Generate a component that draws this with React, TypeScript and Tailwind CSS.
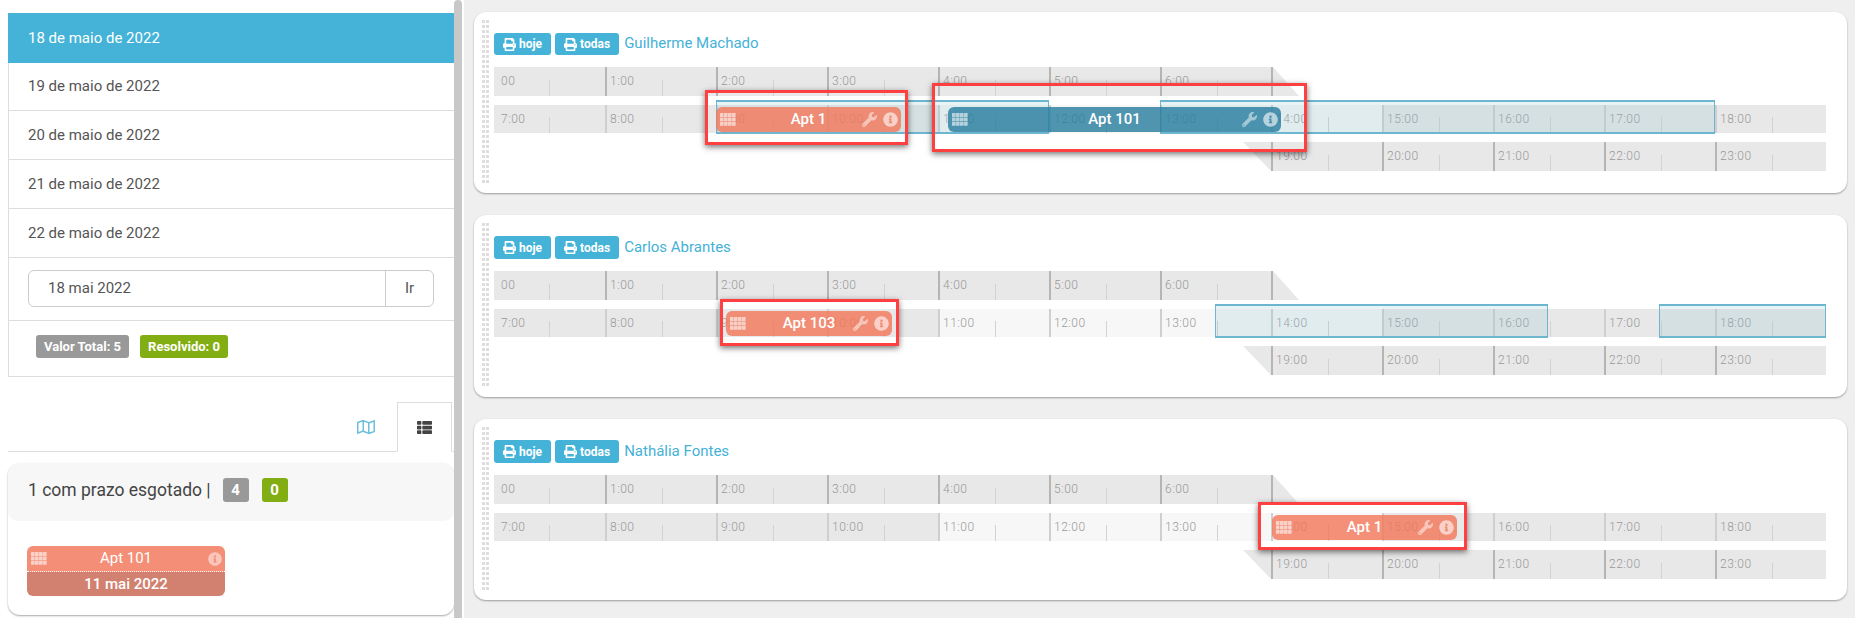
import React from 'react';
import { FaPrint, FaWrench, FaInfoCircle, FaRegMap, FaThList } from 'react-icons/fa';

const row1 = ['00', '1:00', '2:00', '3:00', '4:00', '5:00', '6:00'];
const row2 = ['7:00', '8:00', '9:00', '10:00', '11:00', '12:00', '13:00', '14:00', '15:00', '16:00', '17:00', '18:00'];
const row3 = ['19:00', '20:00', '21:00', '22:00', '23:00'];
const lightHours = ['11:00', '12:00', '13:00', '14:00'];
const days = ['19 de maio de 2022', '20 de maio de 2022', '21 de maio de 2022', '22 de maio de 2022'];

function GridIcon() {
  const cells = [];
  for (let r = 0; r < 3; r++) {
    for (let c = 0; c < 4; c++) {
      cells.push(<rect key={`${r}-${c}`} x={c * 4} y={r * 4.4} width="3.6" height="3.9" rx="0.5" />);
    }
  }
  return (
    <svg width="16" height="13" viewBox="0 0 16 13" className="fill-white opacity-60 shrink-0">
      {cells}
    </svg>
  );
}

function HourCell({ label, first, soft, light }: { label: string; first?: boolean; soft?: boolean; light?: boolean }) {
  return (
    <div
      className={`relative w-[111px] h-full shrink-0 font-light text-[12px] leading-[28px] tracking-[0.5px] text-[#999] ${
        light ? 'bg-[#f7f7f7]' : 'bg-[#e8e8e8]'
      } ${first ? 'pl-[7px]' : soft ? 'border-l-2 border-[#cfcfcf] pl-[3px]' : 'border-l-2 border-[#b5b5b5] pl-[3px]'}`}
    >
      {label}
      <span className="absolute left-[55px] bottom-0 w-px h-4 bg-[#d2d2d2]" />
    </div>
  );
}

function Highlight({ left, width }: { left: number; width: number }) {
  return (
    <div
      className="absolute -top-[5px] h-[34px] border-l border-r border-t-2 border-b-2 border-[#6db6cf] bg-[#8ec3d2]/20"
      style={{ left, width }}
    />
  );
}

function Pill({ left, width, label, blue }: { left: number; width: number; label: string; blue?: boolean }) {
  return (
    <div
      className={`absolute top-[2px] h-[25px] rounded-[6px] flex items-center pl-1 pr-[3px] text-white ${
        blue ? 'bg-[#257c9d]/80' : 'bg-[#f27557]/80'
      }`}
      style={{ left, width }}
    >
      <GridIcon />
      <span className="absolute inset-0 flex items-center justify-center text-[15px] font-medium">{label}</span>
      <FaWrench className="relative ml-auto text-[15px] opacity-50 mr-[6px]" />
      <FaInfoCircle className="relative text-[15px] opacity-60" />
    </div>
  );
}

function RedBox({ left, top, width, height }: { left: number; top: number; width: number; height: number }) {
  return (
    <div
      className="absolute border-[3px] border-[#ff4040] shadow-[0_2px_6px_rgba(0,0,0,0.55)]"
      style={{ left, top, width, height }}
    />
  );
}

function PrintButton({ label, tall }: { label: string; tall?: boolean }) {
  return (
    <button
      className={`flex items-center gap-[3px] px-[9px] rounded-[3px] bg-[#44b3d7] text-white text-[12px] font-bold ${
        tall ? 'h-[23px]' : 'h-[22px]'
      }`}
    >
      <FaPrint className="text-[13px]" />
      {label}
    </button>
  );
}

function ScheduleCard({
  name,
  tall,
  tallCard,
  children,
}: {
  name: string;
  tall?: boolean;
  tallCard?: boolean;
  children: React.ReactNode;
}) {
  return (
    <section
      className={`flex shrink-0 bg-white rounded-[12px] shadow-[0_1px_2px_rgba(0,0,0,0.35)] pl-2 pt-2 ${
        tallCard ? 'h-[182px]' : 'h-[181px]'
      }`}
    >
      <div className="grid grid-cols-2 gap-x-px gap-y-[2px] w-[7px] h-[165px] content-start overflow-hidden">
        {Array.from({ length: 66 }).map((_, i) => (
          <span key={i} className="w-[3px] h-[3px] bg-[#dedede]" />
        ))}
      </div>
      <div className="ml-[5px] pt-[13px] w-[1332px]">
        <div className="flex items-center gap-1">
          <PrintButton label="hoje" tall={tall} />
          <PrintButton label="todas" tall={tall} />
          <span className="ml-px pb-[2px] leading-[18px] text-[#45b2d7] text-[15px]">{name}</span>
        </div>

        <div className="flex mt-3 h-[29px]">
          {row1.map((h, i) => (
            <HourCell key={h} label={h} first={i === 0} />
          ))}
          <div className="w-[2px] bg-[#b5b5b5]" />
          <div className="w-[26px] bg-[#e8e8e8] [clip-path:polygon(0_0,100%_100%,0_100%)]" />
        </div>

        <div className="relative z-10 flex mt-[9px] h-[28px]">
          {row2.map((h, i) => (
            <HourCell key={h} label={h} first={i === 0} soft light={lightHours.includes(h)} />
          ))}
          {children}
        </div>

        <div className="flex mt-[9px] h-[29px] ml-[749px]">
          <div className="w-[28px] bg-[#e8e8e8] [clip-path:polygon(0_0,100%_0,100%_100%)]" />
          {row3.map((h) => (
            <HourCell key={h} label={h} />
          ))}
        </div>
      </div>
    </section>
  );
}

function Sidebar() {
  return (
    <aside className="flex shrink-0 w-[464px] h-full bg-white">
      <div className="w-[454px] pl-2 pt-[13px] text-[15px] text-[#555]">
        <div className="h-[50px] flex items-center pl-5 bg-[#44b3d7] text-white">18 de maio de 2022</div>
        <div className="border-l border-[#ddd]">
          {days.map((d, i) => (
            <div
              key={d}
              className={`flex items-center pl-[19px] border-b border-[#ddd] ${i === 0 ? 'h-[48px]' : 'h-[49px]'}`}
            >
              {d}
            </div>
          ))}
          <div className="h-[63px] pl-[19px] pt-3 border-b border-[#ddd]">
            <div className="flex w-[406px] h-[37px] border border-[#ccc] rounded-[6px]">
              <div className="flex-1 flex items-center pl-[19px]">18 mai 2022</div>
              <div className="w-[48px] flex items-center justify-center border-l border-[#ccc]">Ir</div>
            </div>
          </div>
          <div className="h-[56px] pl-[27px] pt-[14px] flex gap-[11px] border-b border-[#ddd] text-white text-[13px] font-bold">
            <span className="h-[23px] w-[93px] rounded-[3px] bg-[#999] flex items-center justify-center">Valor Total: 5</span>
            <span className="h-[23px] w-[88px] rounded-[3px] bg-[#82ae13] flex items-center justify-center">Resolvido: 0</span>
          </div>
        </div>

        <div className="flex justify-end mt-[25px] h-[50px] border-b border-[#ddd] pr-[2px]">
          <div className="w-[55px] flex items-center justify-center pr-2">
            <FaRegMap className="text-[18px] text-[#6cc0dc]" />
          </div>
          <div className="w-[55px] flex items-center justify-center bg-white border border-[#ddd] border-b-white h-[50px]">
            <FaThList className="text-[15px] text-[#444]" />
          </div>
        </div>

        <div className="mt-[11px] h-[152px] rounded-[12px] shadow-[0_1px_2px_rgba(0,0,0,0.35)] bg-white">
          <div className="h-[58px] pb-1 bg-[#f7f7f7] rounded-t-[12px] rounded-b-[10px] flex items-center pl-5 text-[17.5px] text-[#444]">
            <span>1 com prazo esgotado |</span>
            <span className="ml-[12px] w-[26px] h-6 rounded-[3px] bg-[#999] text-white text-[15px] font-bold flex items-center justify-center">4</span>
            <span className="ml-[13px] w-[26px] h-6 rounded-[3px] bg-[#82ae13] text-white text-[15px] font-bold flex items-center justify-center">0</span>
          </div>
          <div className="ml-[19px] mt-[25px] w-[198px] rounded-[6px] overflow-hidden text-white">
            <div className="relative flex items-center h-[26px] bg-[#f58e76] border-b border-dotted border-white pl-1 pr-[3px]">
              <GridIcon />
              <span className="absolute inset-0 flex items-center justify-center text-[15px]">Apt 101</span>
              <FaInfoCircle className="relative ml-auto text-[14px] opacity-50" />
            </div>
            <div className="h-6 bg-[#d2806f] flex items-center justify-center text-[15px] font-medium">11 mai 2022</div>
          </div>
        </div>
      </div>
      <div className="w-2 h-full bg-[#c8c8c8] rounded-t-[4px]" />
    </aside>
  );
}

export default function App() {
  return (
    <div className="flex h-[618px] overflow-hidden font-['Roboto',sans-serif]">
      <Sidebar />
      <main className="flex-1 bg-[#efefef] pl-[10px] pr-2 pt-3 flex flex-col gap-[22px]">
        <ScheduleCard name="Guilherme Machado">
          <Highlight left={222} width={333} />
          <Highlight left={666} width={555} />
          <Pill left={222} width={185} label="Apt 1" />
          <Pill left={454} width={333} label="Apt 101" blue />
          <RedBox left={211} top={-15} width={203} height={55} />
          <RedBox left={438} top={-22} width={375} height={69} />
        </ScheduleCard>
        <ScheduleCard name="Carlos Abrantes" tall tallCard>
          <Highlight left={721} width={333} />
          <Highlight left={1165} width={167} />
          <Pill left={232} width={166} label="Apt 103" />
          <RedBox left={226} top={-10} width={179} height={47} />
        </ScheduleCard>
        <ScheduleCard name="Nathália Fontes" tall>
          <Pill left={778} width={185} label="Apt 1" />
          <RedBox left={764} top={-11} width={209} height={48} />
        </ScheduleCard>
      </main>
    </div>
  );
}
